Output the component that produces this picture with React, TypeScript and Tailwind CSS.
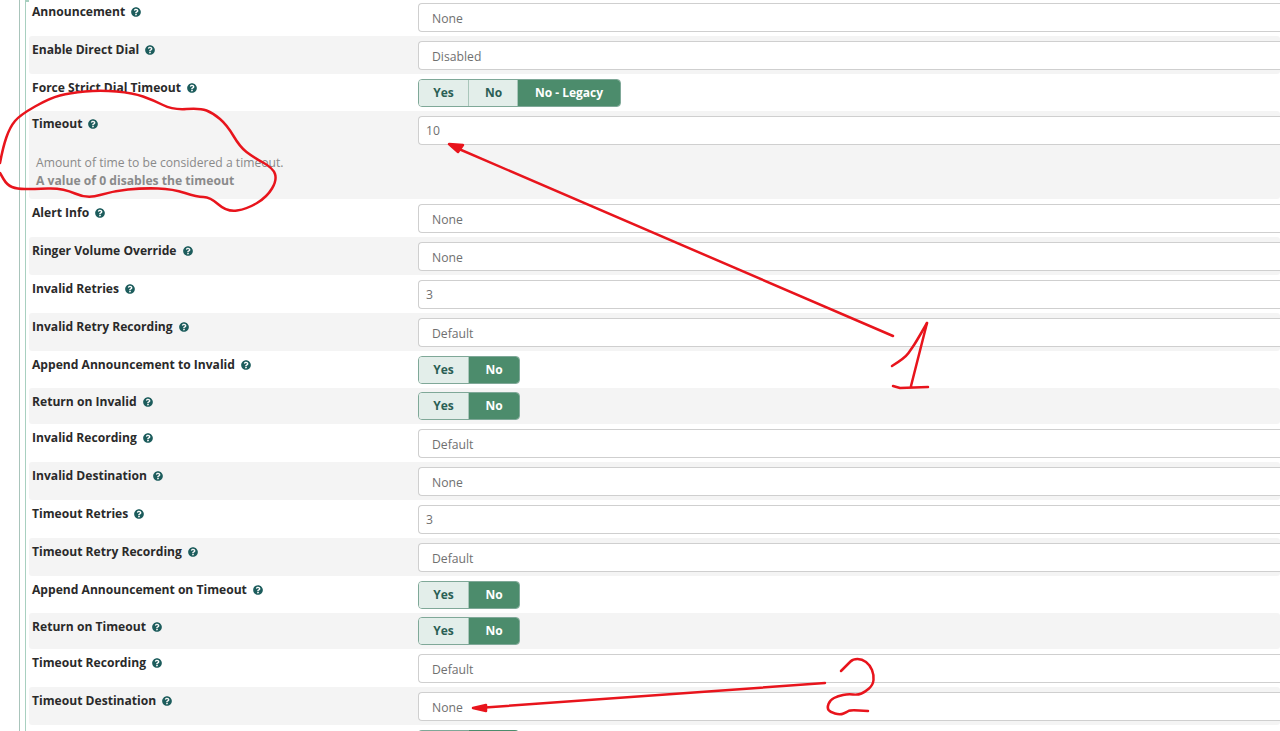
import { FaQuestionCircle } from 'react-icons/fa'

type Row = {
  label: string
  value?: string
  indent?: boolean
  options?: string[]
  help?: boolean
}

const rows: Row[] = [
  { label: 'Announcement', value: 'None' },
  { label: 'Enable Direct Dial', value: 'Disabled' },
  { label: 'Force Strict Dial Timeout', options: ['Yes', 'No', 'No - Legacy'] },
  { label: 'Timeout', value: '10', indent: true, help: true },
  { label: 'Alert Info', value: 'None' },
  { label: 'Ringer Volume Override', value: 'None' },
  { label: 'Invalid Retries', value: '3', indent: true },
  { label: 'Invalid Retry Recording', value: 'Default' },
  { label: 'Append Announcement to Invalid', options: ['Yes', 'No'] },
  { label: 'Return on Invalid', options: ['Yes', 'No'] },
  { label: 'Invalid Recording', value: 'Default' },
  { label: 'Invalid Destination', value: 'None' },
  { label: 'Timeout Retries', value: '3', indent: true },
  { label: 'Timeout Retry Recording', value: 'Default' },
  { label: 'Append Announcement on Timeout', options: ['Yes', 'No'] },
  { label: 'Return on Timeout', options: ['Yes', 'No'] },
  { label: 'Timeout Recording', value: 'Default' },
  { label: 'Timeout Destination', value: 'None' },
]

// hand drawn strokes, rounded through the midpoints
function smooth(pts: number[][]) {
  let d = `M${pts[0][0]} ${pts[0][1]}`
  for (let i = 1; i < pts.length - 1; i++) {
    const mx = (pts[i][0] + pts[i + 1][0]) / 2
    const my = (pts[i][1] + pts[i + 1][1]) / 2
    d += ` Q${pts[i][0]} ${pts[i][1]} ${mx} ${my}`
  }
  const last = pts[pts.length - 1]
  return d + ` L${last[0]} ${last[1]}`
}

const circle = [
  [0, 163], [3, 147], [10, 127], [20, 115], [50, 98], [70, 93], [100, 90], [133, 93], [153, 100], [173, 110],
  [200, 108], [213, 113], [227, 125], [240, 147], [253, 157], [273, 168], [277, 180], [267, 197], [247, 209],
  [227, 212], [210, 197], [197, 197], [173, 189], [143, 188], [113, 191], [87, 199], [63, 188], [33, 189],
  [17, 189], [7, 185], [0, 173],
]
const one = [[892, 366], [905, 358], [912, 348], [916, 342], [927, 323]]
const two = [
  [841, 671], [848, 664], [853, 659], [862, 659], [870, 665], [874, 675], [873, 685], [865, 692], [858, 695],
  [848, 694], [838, 696], [830, 700], [827, 708], [830, 712], [840, 715], [847, 712], [850, 710], [868, 711],
]

function Toggle({ options }: { options: string[] }) {
  return (
    <div className="flex h-[28px] w-fit overflow-hidden rounded-[4px] border border-[#7fa898] text-[12px] font-bold">
      {options.map((o, i) => {
        const active = i === options.length - 1
        let width = 'w-[49px] pl-[1px]'
        if (i === 0) width = 'w-[50px]'
        else if (o.length > 3) width = 'w-[102px]'
        else if (active) width = 'w-[50px]'
        return (
          <span
            key={o}
            className={
              (active
                ? 'flex items-center justify-center bg-[#4c8c6c] text-white '
                : 'flex items-center justify-center border-r border-[#a9c6ba] bg-[#e3eeea] text-[#2b5f55] ') + width
            }
          >
            {o}
          </span>
        )
      })}
    </div>
  )
}

function FormRow({ row, index }: { row: Row; index: number }) {
  const striped = index % 2 === 1 || row.help
  return (
    <div className={'flex rounded-[3px] ' + (striped ? 'bg-[#f4f4f4]' : 'bg-white')}>
      <div className={'w-[389px] shrink-0 pl-[3px] ' + (row.help ? 'pt-[5px]' : 'pt-[6px]')}>
        <div className="flex h-[16px] items-center gap-[6px] text-[12.1px] leading-[16px] font-bold text-[#2a2a2a]">
          {row.label}
          <FaQuestionCircle className="size-[10px] text-[#1c5c5c]" />
        </div>
        {row.help && (
          <div className="mt-[22px] mb-[9px] pl-[4px] text-[12.15px] leading-[18px] text-[#8a8a8a]">
            <p>Amount of time to be considered a timeout.</p>
            <p className="font-bold">A value of 0 disables the timeout</p>
          </div>
        )}
      </div>
      <div className="flex-1">
        {row.options ? (
          <div className={striped ? 'pt-[4px] pb-[4px]' : 'pt-[5px] pb-[4px]'}>
            <Toggle options={row.options} />
          </div>
        ) : (
          <div className="pt-[5px] pb-[4px]">
            <div
              className={
                'flex h-[29px] items-center rounded-l-[4px] border border-r-0 border-[#cfcfcf] bg-white text-[12.2px] text-[#707070] ' +
                (row.indent ? 'pt-[2px] pl-[7px]' : 'pt-[3px] pl-[13px]')
              }
            >
              {row.value}
            </div>
          </div>
        )}
      </div>
    </div>
  )
}

export default function App() {
  return (
    <div className="relative h-[731px] w-[1280px] overflow-hidden bg-white font-['Open_Sans',sans-serif]">
      <div className="ml-[19px] h-full border-l border-[#a9c4bb] pl-[5px]">
        <div className="h-full border-t-2 border-l border-[#a8d0c0] pl-[3px]">
          <div className="-mt-[4px]">
            {rows.map((row, i) => (
              <FormRow key={row.label} row={row} index={i} />
            ))}
            <div className="flex pt-[5px]">
              <div className="w-[389px] shrink-0" />
              <div className="h-[28px] w-[51px] rounded-l-[4px] border border-r-0 border-[#7fa898] bg-[#e3eeea]" />
              <div className="h-[28px] w-[50px] rounded-r-[4px] bg-[#4c8c6c]" />
            </div>
          </div>
        </div>
      </div>
      <svg className="pointer-events-none absolute inset-0" width="1280" height="731" fill="none" stroke="#e8141c" strokeWidth="2.5" strokeLinejoin="round" strokeLinecap="round">
        <path d={smooth(circle)} />
        <path d="M893 336 L452 146" />
        <path d="M449 144 L463 145 L458 152 Z" fill="#e8141c" />
        <path d={smooth(one)} />
        <path d="M927 323 L911 386 M893 386 L900 388 L928 387" />
        <path d="M825 683 L478 708" />
        <path d="M473 708 L486 705 L486 711 Z" fill="#e8141c" />
        <path d={smooth(two)} />
      </svg>
    </div>
  )
}
